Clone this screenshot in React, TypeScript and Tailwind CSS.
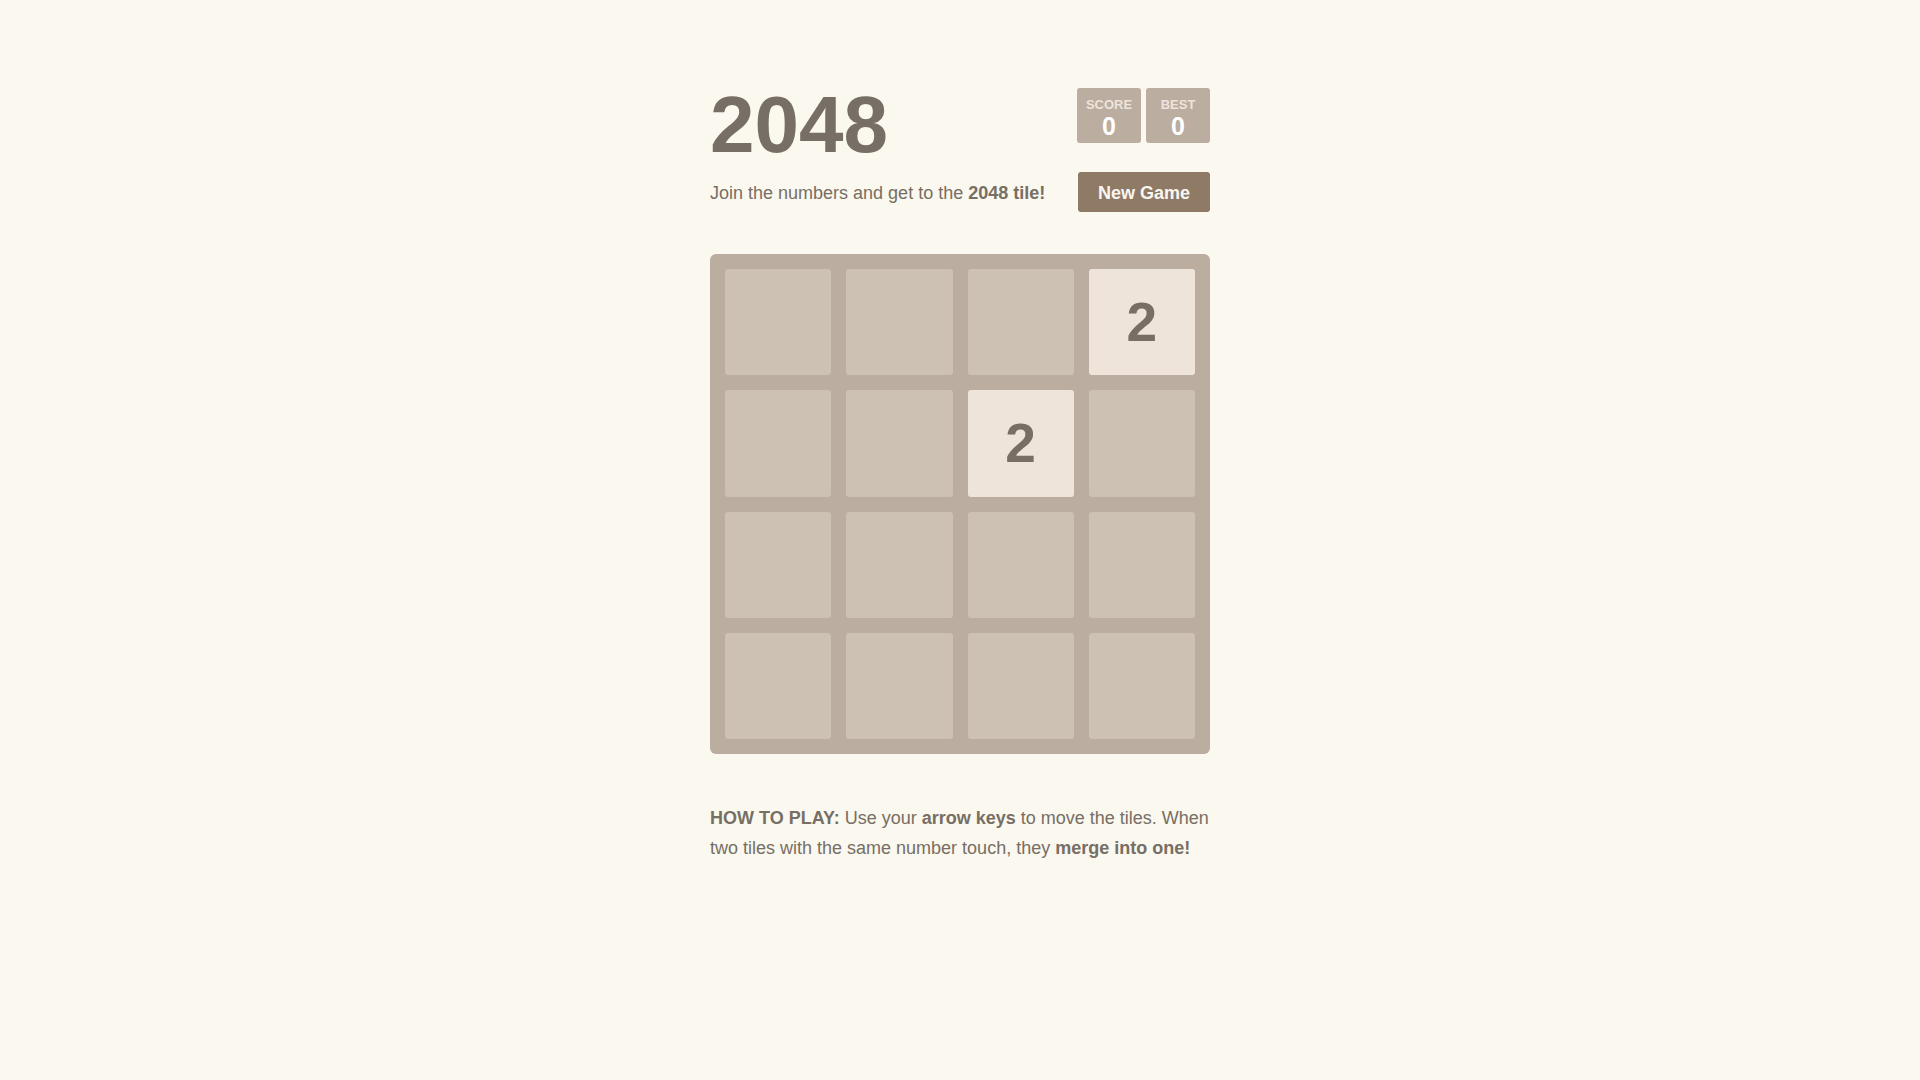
import React from 'react';

// 0 = empty cell
const board: number[][] = [
  [0, 0, 0, 2],
  [0, 0, 2, 0],
  [0, 0, 0, 0],
  [0, 0, 0, 0],
];

function ScoreBox({ label, value }: { label: string; value: number }) {
  return (
    <div className="flex h-[55px] w-[64px] flex-col items-center rounded-[3px] bg-[#bbada0] pt-[9px]">
      <span className="text-[13px] font-bold leading-[15px] uppercase text-[#eee4da]">{label}</span>
      <span className="text-[25px] font-bold leading-[29px] text-white">{value}</span>
    </div>
  );
}

function Tile({ value }: { value: number }) {
  if (!value) {
    return <div className="h-[106.25px] w-[106.25px] rounded-[3px] bg-[#cdc1b4]" />;
  }
  return (
    <div className="flex h-[106.25px] w-[106.25px] items-center justify-center rounded-[3px] bg-[#eee4da] text-[55px] font-bold text-[#776e65]">
      {value}
    </div>
  );
}

export default function App() {
  return (
    <div
      className="min-h-screen bg-[#faf8ef] text-[#776e65]"
      style={{ fontFamily: '"Liberation Sans", Arial, sans-serif' }}
    >
      <div className="mx-auto w-[500px] pt-[85px]">
        {/* Heading */}
        <div className="flex items-start justify-between">
          <h1 className="m-0 text-[80px] font-bold leading-[80px]">2048</h1>
          <div className="mt-[3px] flex gap-[5px]">
            <ScoreBox label="Score" value={0} />
            <ScoreBox label="Best" value={0} />
          </div>
        </div>

        {/* Intro + button */}
        <div className="mt-[7px] flex items-start justify-between">
          <p className="text-[18px] leading-[42px]">
            Join the numbers and get to the <strong className="font-bold">2048 tile!</strong>
          </p>
          <button className="block h-[40px] w-[132px] overflow-hidden rounded-[3px] bg-[#8f7a66] text-[18px] font-bold leading-[42px] text-[#f9f6f2]">
            New Game
          </button>
        </div>

        {/* Board */}
        <div className="mt-[40px] grid h-[500px] w-[500px] grid-cols-4 gap-[15px] rounded-[6px] bg-[#bbada0] p-[15px]">
          {board.flat().map((v, i) => (
            <Tile key={i} value={v} />
          ))}
        </div>

        {/* Instructions */}
        <p className="mt-[49px] text-[18px] leading-[30px]">
          <strong className="font-bold">HOW TO PLAY:</strong> Use your{' '}
          <strong className="font-bold">arrow keys</strong> to move the tiles. When two tiles with
          the same number touch, they <strong className="font-bold">merge into one!</strong>
        </p>
      </div>
    </div>
  );
}
